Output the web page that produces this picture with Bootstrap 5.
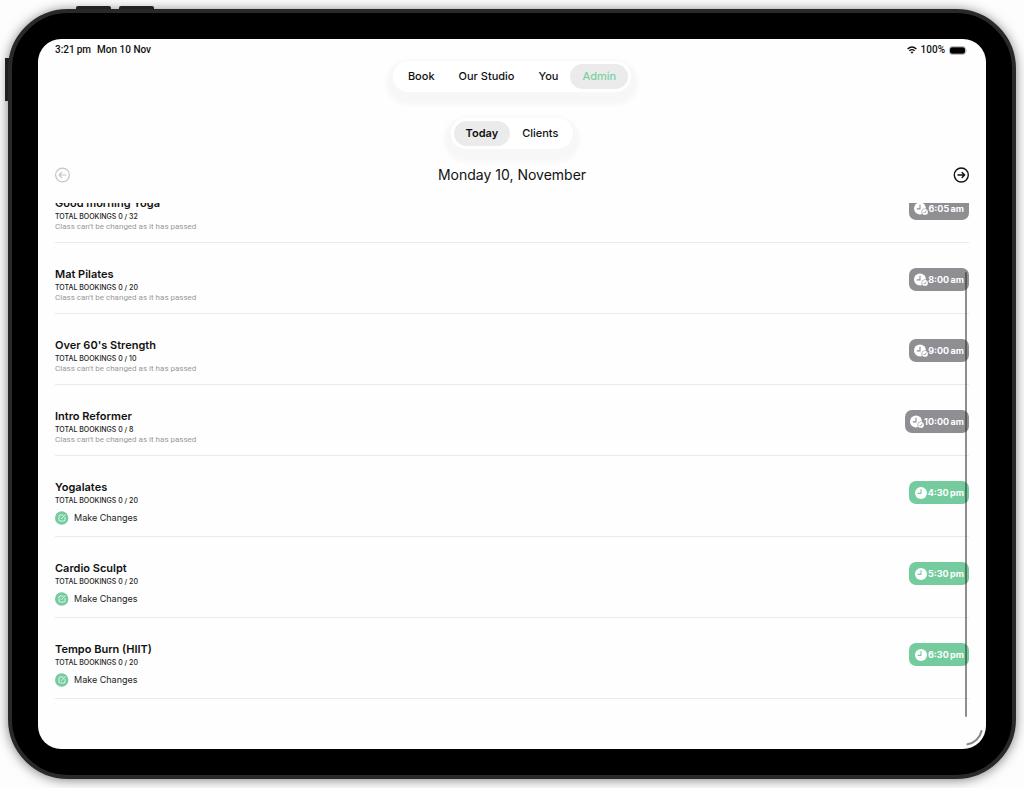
<!DOCTYPE html>
<html lang="en">
<head>
<meta charset="utf-8">
<meta name="viewport" content="width=device-width, initial-scale=1">
<title>Studio admin – Today</title>
<link rel="stylesheet" href="https://cdn.jsdelivr.net/npm/bootstrap@5.3.0/dist/css/bootstrap.min.css">
<style>
body{background:#fdfdfd;font-family:Inter,"Liberation Sans",sans-serif;color:#111;padding:9px 8px}
button{font-family:inherit}
.tablet{background:#000;border:4px solid #29292b;border-radius:60px;padding:26px;box-shadow:0 1px 12px rgba(0,0,0,.5);min-height:calc(100vh - 18px)}
.side-key,.top-key{position:absolute;background:#28292b;z-index:-1}
.side-key{left:-7px;top:45px;width:5px;height:43px}
.top-key{top:-7px;width:35px;height:5px;border-radius:2px 2px 0 0}
.key-up{left:64px}
.key-down{left:107px}
.display-area{background:#fefefe;border-radius:23px;padding:0 17px}
.status-line{font-family:Roboto,"Liberation Sans",sans-serif;font-size:10px;line-height:12px;font-weight:500;padding-top:5px}
.clock-line{gap:6px}
.pill-nav{background:#fff;border-radius:16px;padding:3px;box-shadow:0 6px 5px 7px rgba(20,30,25,.03)}
.pill-nav a{font-size:11px;line-height:25px;font-weight:500;color:#111;text-decoration:none;border-radius:13px;padding:0 12px}
.pill-nav a.active{background:#ebebeb}
.main-tabs{margin-top:5px}
.main-tabs a.active{color:#7bcfa0}
.sub-tabs{margin-top:26px}
.sub-tabs a.active{font-weight:600}
.day-bar{margin-top:16px;line-height:20px}
.day-bar h1{font-size:14px;line-height:20px;font-weight:400}
.arrow-btn{background:none;border:0;padding:0;color:#111}
.arrow-btn:disabled{color:#c4c4c4}
.class-scroller{margin-top:18px}
.class-list{margin-top:-31px}
.class-row{border-bottom:1px solid #e9ebea;padding:21px 0 10px}
.class-row h2{font-size:11px;line-height:20px;font-weight:600}
.bookings{font-size:7px;line-height:8px;font-weight:500;color:#222}
.passed{font-family:Roboto,"Liberation Sans",sans-serif;font-size:8px;line-height:11px;color:#999}
.change-btn{background:none;border:0;padding:0;margin:6px 0 1px;gap:5px;font-size:9px;line-height:14px;color:#222}
.time-chip{background:#8e8e93;color:#fff;border-radius:7px;height:23px;margin-top:4px;padding:0 5px;font-size:9px;line-height:23px;font-weight:700;white-space:nowrap}
.time-chip.upcoming{background:#74cb9d}
.scroll-thumb{position:absolute;right:19px;top:233px;bottom:32px;width:2px;border-radius:1px;background:rgba(50,50,50,.55)}
.corner-grip{position:absolute;right:1px;bottom:1px}
</style>
</head>
<body>
<svg class="d-none">
<symbol id="i-clock" viewBox="0 0 14 14"><circle cx="7" cy="7" r="6" fill="#fff"/><path d="M7 3.5V7.4H4" fill="none" stroke="currentColor" stroke-width="1.1" stroke-linecap="round" stroke-linejoin="round"/></symbol>
<symbol id="i-clock-done" viewBox="0 0 14 14"><circle cx="6" cy="6.5" r="6" fill="#fff"/><path d="M6 3.1V6.9H3.2" fill="none" stroke="currentColor" stroke-width="1.1" stroke-linecap="round"/><circle cx="11" cy="9.9" r="3.5" fill="currentColor"/><circle cx="11" cy="9.9" r="2.9" fill="#fff"/><path d="M9.6 10l1 1 1.7-2.3" fill="none" stroke="currentColor" stroke-width=".9"/></symbol>
<symbol id="i-edit" viewBox="0 0 14 14"><circle cx="6.7" cy="7" r="6.7" fill="#74cb9d"/><path d="M8 4H5a1 1 0 0 0-1 1v4a1 1 0 0 0 1 1h4a1 1 0 0 0 1-1V6.4M6.4 7.7l3.9-4" fill="none" stroke="#fff" stroke-width=".8" stroke-linecap="round"/></symbol>
</svg>
<main class="tablet position-relative d-flex flex-column">
  <span class="side-key"></span><span class="top-key key-up"></span><span class="top-key key-down"></span>
  <div class="display-area position-relative flex-grow-1 d-flex flex-column">
    <div class="status-line d-flex justify-content-between">
      <div class="clock-line d-flex"><span>3:21&#8201;pm</span><span>Mon 10 Nov</span></div>
      <div class="d-flex align-items-center"><svg width="10" height="8" viewBox="0 0 10 8" fill="none" stroke="#111" stroke-width="1.4"><path d="M.6 3Q5-.9 9.4 3M2.3 4.7Q5 2.5 7.7 4.7"/><path d="M3.5 5.9Q5 4.9 6.5 5.9L5 7.7Z" fill="#111" stroke="none"/></svg><span class="ms-1 me-1">100%</span><svg width="20" height="9" viewBox="0 0 20 9"><rect x=".5" y=".5" width="16" height="8" rx="2.6" fill="#fff" stroke="#bbb"/><rect x="1" y="1.3" width="15" height="6.4" rx="2"/><path d="M17.5 3v3q1-1.5 0-3" fill="#999"/></svg></div>
    </div>
    <nav class="pill-nav main-tabs d-flex align-self-center"><a href="#">Book</a><a href="#">Our Studio</a><a href="#">You</a><a href="#" class="active">Admin</a></nav>
    <nav class="pill-nav sub-tabs d-flex align-self-center"><a href="#" class="active">Today</a><a href="#">Clients</a></nav>
    <div class="day-bar d-flex align-items-center justify-content-between">
      <button class="arrow-btn d-flex" disabled aria-label="Previous day"><svg width="16" height="16" viewBox="0 0 16 16" fill="none" stroke="currentColor" stroke-width="1.2" stroke-linecap="round" stroke-linejoin="round"><circle cx="7.5" cy="8" r="6.9"/><path d="M10.8 8H4.3M6.7 5.4L4.2 8l2.5 2.6"/></svg></button>
      <h1 class="mb-0">Monday 10, November</h1>
      <button class="arrow-btn d-flex" aria-label="Next day"><svg width="16" height="16" viewBox="0 0 16 16" fill="none" stroke="currentColor" stroke-width="1.4" stroke-linecap="round" stroke-linejoin="round"><circle cx="8.3" cy="8" r="7"/><path d="M5 8h6.5M9.1 5.4L11.6 8l-2.5 2.6"/></svg></button>
    </div>
    <div class="class-scroller flex-grow-1 overflow-hidden">
      <div class="class-list">
        <article class="class-row d-flex justify-content-between align-items-start"><div><h2 class="mb-0">Good morning Yoga</h2><div class="bookings">TOTAL BOOKINGS 0 / 32</div><div class="passed">Class can't be changed as it has passed</div></div><div class="time-chip d-flex align-items-center"><svg width="14" height="14" color="#8e8e93"><use href="#i-clock-done"/></svg><span>6:05&#8201;am</span></div></article>
        <article class="class-row d-flex justify-content-between align-items-start"><div><h2 class="mb-0">Mat Pilates</h2><div class="bookings">TOTAL BOOKINGS 0 / 20</div><div class="passed">Class can't be changed as it has passed</div></div><div class="time-chip d-flex align-items-center"><svg width="14" height="14" color="#8e8e93"><use href="#i-clock-done"/></svg><span>8:00&#8201;am</span></div></article>
        <article class="class-row d-flex justify-content-between align-items-start"><div><h2 class="mb-0">Over 60's Strength</h2><div class="bookings">TOTAL BOOKINGS 0 / 10</div><div class="passed">Class can't be changed as it has passed</div></div><div class="time-chip d-flex align-items-center"><svg width="14" height="14" color="#8e8e93"><use href="#i-clock-done"/></svg><span>9:00&#8201;am</span></div></article>
        <article class="class-row d-flex justify-content-between align-items-start"><div><h2 class="mb-0">Intro Reformer</h2><div class="bookings">TOTAL BOOKINGS 0 / 8</div><div class="passed">Class can't be changed as it has passed</div></div><div class="time-chip d-flex align-items-center"><svg width="14" height="14" color="#8e8e93"><use href="#i-clock-done"/></svg><span>10:00&#8201;am</span></div></article>
        <article class="class-row d-flex justify-content-between align-items-start"><div><h2 class="mb-0">Yogalates</h2><div class="bookings">TOTAL BOOKINGS 0 / 20</div><button class="change-btn d-flex align-items-center"><svg width="14" height="14"><use href="#i-edit"/></svg>Make Changes</button></div><div class="time-chip upcoming d-flex align-items-center"><svg width="14" height="14" color="#74cb9d"><use href="#i-clock"/></svg><span>4:30&#8201;pm</span></div></article>
        <article class="class-row d-flex justify-content-between align-items-start"><div><h2 class="mb-0">Cardio Sculpt</h2><div class="bookings">TOTAL BOOKINGS 0 / 20</div><button class="change-btn d-flex align-items-center"><svg width="14" height="14"><use href="#i-edit"/></svg>Make Changes</button></div><div class="time-chip upcoming d-flex align-items-center"><svg width="14" height="14" color="#74cb9d"><use href="#i-clock"/></svg><span>5:30&#8201;pm</span></div></article>
        <article class="class-row d-flex justify-content-between align-items-start"><div><h2 class="mb-0">Tempo Burn (HIIT)</h2><div class="bookings">TOTAL BOOKINGS 0 / 20</div><button class="change-btn d-flex align-items-center"><svg width="14" height="14"><use href="#i-edit"/></svg>Make Changes</button></div><div class="time-chip upcoming d-flex align-items-center"><svg width="14" height="14" color="#74cb9d"><use href="#i-clock"/></svg><span>6:30&#8201;pm</span></div></article>
      </div>
    </div>
    <span class="scroll-thumb"></span>
    <svg class="corner-grip" width="20" height="20" viewBox="0 0 20 20" fill="none" stroke="#888" stroke-width="2" stroke-linecap="round"><path d="M16.5 3A17 17 0 0 1 2.5 16.3"/></svg>
  </div>
</main>
<script src="https://cdn.jsdelivr.net/npm/bootstrap@5.3.0/dist/js/bootstrap.bundle.min.js"></script>
</body>
</html>
